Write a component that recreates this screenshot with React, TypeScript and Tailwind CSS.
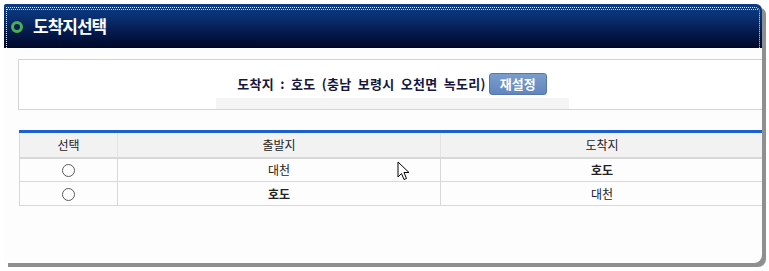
import * as React from "react";

const rows = [
  { from: "대천", to: "호도", fromBold: false, toBold: true },
  { from: "호도", to: "대천", fromBold: true, toBold: false },
];

function Cursor() {
  return (
    <svg
      className="pointer-events-none absolute left-[397px] top-[161px]"
      width="14"
      height="20"
      viewBox="0 0 14 20"
    >
      <path
        d="M1 1 L1 16 L4.5 12.5 L7 18.5 L9.5 17.5 L7 11.5 L12 11.5 Z"
        fill="#fff"
        stroke="#000"
        strokeWidth="1"
        strokeLinejoin="miter"
      />
    </svg>
  );
}

function Radio() {
  return (
    <span className="inline-block h-[13px] w-[13px] rounded-full border border-[#5a5a5a] bg-white" />
  );
}

export default function App() {
  return (
    <div className="relative h-[271px] w-[769px] bg-white font-['Noto_Sans_CJK_KR',sans-serif]">
      <div className="absolute left-[4px] top-[4px] h-[259px] w-[758px] overflow-hidden rounded-tl-[2px] rounded-tr-[6px] rounded-br-[8px] bg-[#fdfdfd] shadow-[4px_4px_0_#8f8f8f]">
        {/* title bar */}
        <div className="relative flex h-[44px] items-center gap-[10px] bg-[linear-gradient(180deg,#0c3c86_0%,#0a3276_25%,#041a4c_65%,#000828_100%)] pl-[7px]">
          <div className="pointer-events-none absolute inset-x-[2px] top-[3px] bottom-0 rounded-tr-[5px] border-x border-t border-dotted border-white/90" />
          <div className="pointer-events-none absolute left-[3px] right-[4px] top-[5px] border-t border-dotted border-white/80" />
          <span className="mt-[1px] inline-block h-[12px] w-[12px] rounded-full border-[3px] border-[#48b04e] bg-[#0a2050]" />
          <span className="text-[17px] font-bold tracking-[-1px] text-white">
            도착지선택
          </span>
        </div>

        {/* info box */}
        <div className="ml-[14px] mt-[11px] w-[748px] border border-[#d4d4d4] bg-white">
          <div className="flex flex-col items-center pt-[13px]">
            <div className="flex h-[22px] items-center">
              <span className="text-[13px] font-bold tracking-[0.3px] text-[#16163e] [word-spacing:3px]">
                도착지 : 호도 (충남 보령시 오천면 녹도리)
              </span>
              <button
                type="button"
                className="ml-[3px] h-[22px] w-[58px] rounded-[3px] border border-[#5577aa] bg-[linear-gradient(180deg,#7a9dcc,#6186bd)] text-[13px] font-bold text-white"
              >
                재설정
              </button>
            </div>
            <div className="mt-[3px] h-[11px] w-[353px] bg-[#f4f4f4]" />
          </div>
        </div>

        {/* route table */}
        <table className="ml-[15px] mt-[20px] w-[744px] border-collapse border-t-[3px] border-[#1c5fcf] text-[12px] text-[#222]">
          <thead>
            <tr className="border-b-2 border-[#d8d8d8] bg-[#f2f2f2]">
              <th className="h-[26px] w-[98px] border-l border-[#d8d8d8] font-normal">선택</th>
              <th className="w-[323px] border-l border-[#e4e4e4] font-normal">출발지</th>
              <th className="border-l border-[#e4e4e4] font-normal">도착지</th>
            </tr>
          </thead>
          <tbody>
            {rows.map((r, i) => (
              <tr key={i} className="border-b border-[#d8d8d8]">
                <td className="h-[24px] border-l border-[#d8d8d8] text-center align-middle">
                  <div className="flex justify-center pt-[2px]">
                    <Radio />
                  </div>
                </td>
                <td className={"border-l border-[#d8d8d8] text-center" + (r.fromBold ? " font-bold" : "")}>
                  {r.from}
                </td>
                <td className={"border-l border-[#d8d8d8] text-center" + (r.toBold ? " font-bold" : "")}>
                  {r.to}
                </td>
              </tr>
            ))}
          </tbody>
        </table>
      </div>
      <Cursor />
    </div>
  );
}
